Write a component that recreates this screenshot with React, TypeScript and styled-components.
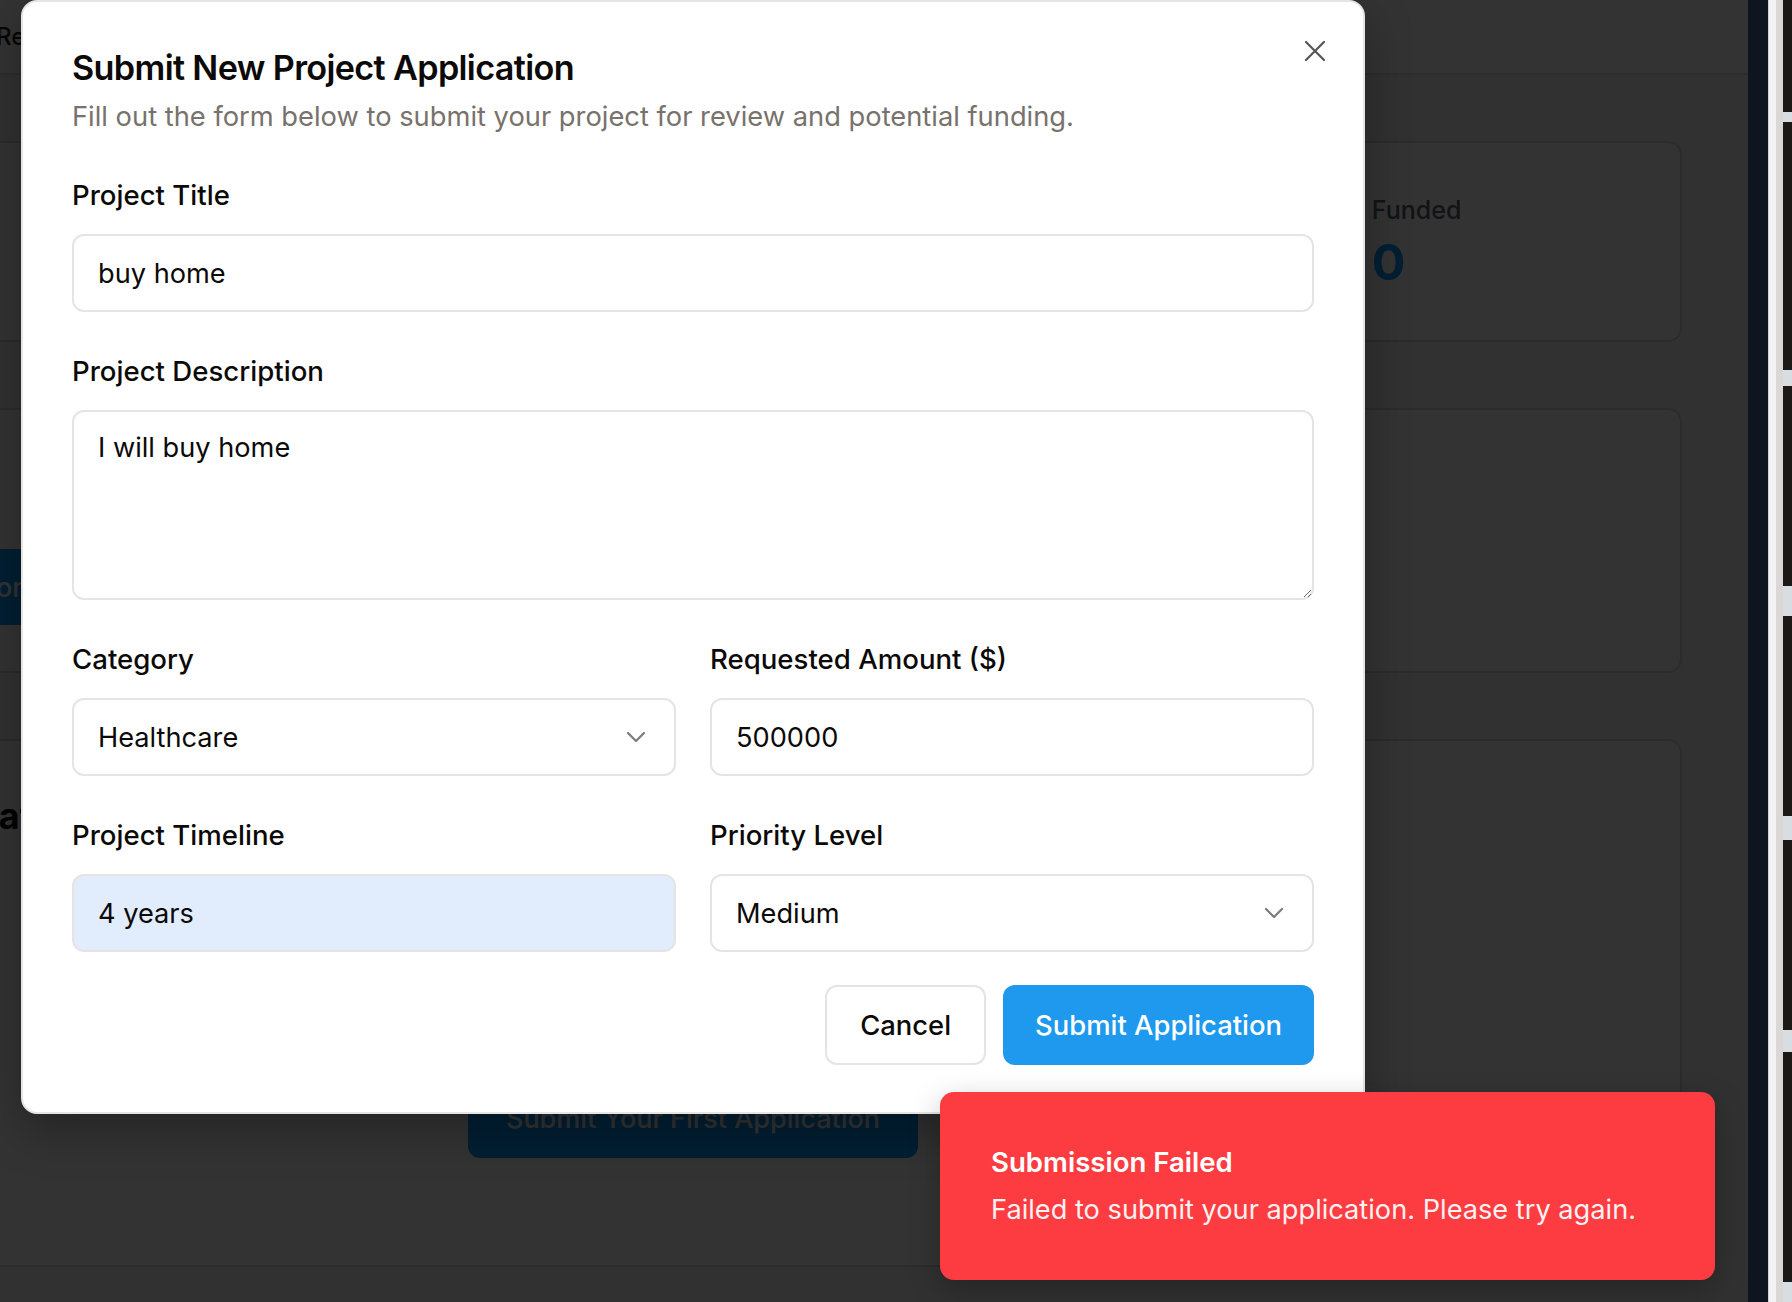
import React from "react";
import styled, { createGlobalStyle } from "styled-components";

const GlobalStyle = createGlobalStyle`
  * { box-sizing: border-box; }
  html, body { margin: 0; padding: 0; background: #333333; overflow: hidden; }
  body { font-family: Inter, "Noto Sans", sans-serif; -webkit-font-smoothing: antialiased; }
  #root { width: 1792px; height: 1302px; }
`;

const Screen = styled.div`
  display: flex;
  width: 1792px;
  height: 1302px;
  overflow: hidden;
`;

const Viewport = styled.div`
  position: relative;
  flex: 0 0 2110px;
  height: 1302px;
  margin-left: -362px;
  overflow: hidden;
  background: #f6f6f6;
`;

/* ---------- page beneath the overlay ---------- */

const Header = styled.header`
  height: 75px;
  display: flex;
  align-items: center;
  gap: 56px;
  padding: 0 66px;
  background: #ffffff;
  border-bottom: 2px solid #dedede;
`;

const Brand = styled.div`
  width: 236px;
  font-size: 28px;
  font-weight: 700;
  color: #111;
`;

const NavLink = styled.span`
  font-size: 24px;
  font-weight: 500;
  color: #222;
`;

const Main = styled.main`
  display: flex;
  flex-direction: column;
  gap: 66px;
  padding: 66px 66px 0;
`;

const StatsGrid = styled.div`
  display: grid;
  grid-template-columns: repeat(5, 1fr);
  gap: 48px;
`;

const Card = styled.section`
  background: #ffffff;
  border: 2px solid #d6d6d6;
  border-radius: 14px;
`;

const StatCard = styled(Card)`
  height: 201px;
  padding: 52px 45px 0;
  display: flex;
  flex-direction: column;
  gap: 8px;
`;

const StatLabel = styled.div`
  font-size: 25px;
  line-height: 30px;
  font-weight: 500;
  color: #5b6270;
`;

const StatValue = styled.div`
  font-size: 50px;
  line-height: 58px;
  font-weight: 700;
  color: #0a9bff;
`;

const ActionsCard = styled(Card)`
  height: 265px;
  padding: 46px 48px;
  display: flex;
  flex-direction: column;
  gap: 8px;
`;

const CardTitle = styled.h2`
  margin: 0;
  font-size: 36px;
  line-height: 44px;
  font-weight: 700;
  color: #111;
`;

const CardText = styled.p`
  margin: 0;
  font-size: 24px;
  line-height: 30px;
  color: #666;
`;

const PrimaryPageButton = styled.button<{ $center?: boolean }>`
  height: 80px;
  margin-top: ${(p) => (p.$center ? "0" : "3px")};
  padding: 0 38px;
  border: none;
  border-radius: 12px;
  background: #0a9bff;
  color: #ffffff;
  font-family: inherit;
  font-size: 27px;
  font-weight: 500;
  align-self: ${(p) => (p.$center ? "center" : "flex-start")};
`;

const ListCard = styled(Card)`
  height: 528px;
  padding: 53px 48px 44px;
  display: flex;
  flex-direction: column;
`;

const EmptyState = styled.div`
  flex: 1;
  display: flex;
  flex-direction: column;
  align-items: center;
  justify-content: flex-end;
  padding-bottom: 63px;
`;

/* ---------- overlay, dialog, toast ---------- */

const Overlay = styled.div`
  position: absolute;
  inset: 0;
  background: rgba(0, 0, 0, 0.8);
`;

const Dialog = styled.div`
  position: absolute;
  top: 0;
  left: 50%;
  transform: translateX(-50%);
  width: 1344px;
  padding: 48px 49px 47px;
  background: #ffffff;
  border: 2px solid #e7e5e4;
  border-radius: 16px;
  box-shadow: 0 16px 48px rgba(0, 0, 0, 0.3);
  display: flex;
  flex-direction: column;
`;

const CloseButton = styled.button`
  position: absolute;
  top: 37px;
  right: 36px;
  width: 24px;
  height: 24px;
  padding: 0;
  border: none;
  background: transparent;
  display: flex;
  align-items: center;
  justify-content: center;
  color: #555555;
`;

const DialogTitle = styled.h1`
  margin: 0;
  font-size: 34.2px;
  line-height: 36px;
  font-weight: 600;
  letter-spacing: -0.65px;
  color: #0c0a09;
`;

const DialogDescription = styled.p`
  margin: 16px 0 0;
  font-size: 27.3px;
  line-height: 30px;
  color: #78716c;
`;

const Form = styled.form`
  margin-top: 48px;
  display: flex;
  flex-direction: column;
  gap: 44px;
`;

const Row = styled.div`
  display: grid;
  grid-template-columns: 1fr 1fr;
  gap: 34px;
`;

const Field = styled.div`
  display: flex;
  flex-direction: column;
  gap: 24px;
`;

const Label = styled.label`
  font-size: 27.6px;
  line-height: 30px;
  font-weight: 500;
  color: #0c0a09;
`;

const TextInput = styled.input<{ $autofill?: boolean }>`
  height: 78px;
  width: 100%;
  padding: 0 24px;
  border: 2px solid #e7e3e3;
  border-radius: 12px;
  background: ${(p) => (p.$autofill ? "#e1ecfc" : "#ffffff")};
  font-family: inherit;
  font-size: 27.2px;
  color: #0c0a09;
  outline: none;
`;

const TextArea = styled.textarea`
  height: 190px;
  width: 100%;
  padding: 19px 24px;
  border: 2px solid #e7e3e3;
  border-radius: 12px;
  background: #ffffff;
  font-family: inherit;
  font-size: 27.2px;
  line-height: 34px;
  color: #0c0a09;
  resize: vertical;
  outline: none;
`;

const SelectTrigger = styled.button`
  height: 78px;
  width: 100%;
  padding: 0 28px 0 24px;
  border: 2px solid #e7e3e3;
  border-radius: 12px;
  background: #ffffff;
  display: flex;
  align-items: center;
  justify-content: space-between;
  font-family: inherit;
  font-size: 27.2px;
  color: #0c0a09;
  text-align: left;
`;

const Footer = styled.div`
  margin-top: 33px;
  display: flex;
  justify-content: flex-end;
  gap: 17px;
`;

const Button = styled.button<{ $primary?: boolean }>`
  height: 80px;
  padding: 0 ${(p) => (p.$primary ? "32px" : "33px")};
  border-radius: 12px;
  border: ${(p) => (p.$primary ? "none" : "2px solid #e7e3e3")};
  background: ${(p) => (p.$primary ? "#1e99ee" : "#ffffff")};
  color: ${(p) => (p.$primary ? "#ffffff" : "#0c0a09")};
  font-family: inherit;
  font-size: 27.4px;
  font-weight: 500;
`;

const Toast = styled.div`
  position: absolute;
  right: 33px;
  bottom: 22px;
  width: 775px;
  height: 188px;
  padding: 0 51px;
  border-radius: 14px;
  background: #fd3c41;
  color: #ffffff;
  display: flex;
  flex-direction: column;
  justify-content: center;
  gap: 18px;
  box-shadow: 0 10px 30px rgba(0, 0, 0, 0.25);
`;

const ToastTitle = styled.div`
  font-size: 27.6px;
  line-height: 30px;
  font-weight: 600;
`;

const ToastText = styled.div`
  font-size: 27.2px;
  line-height: 30px;
  opacity: 0.93;
`;

/* ---------- neighbouring window at the right edge ---------- */

const SideWindow = styled.div`
  flex: 0 0 44px;
  display: flex;
  height: 1302px;
`;

const NavyBar = styled.div`
  width: 20px;
  background: #0e1520;
`;

const PaleBar = styled.div`
  width: 8px;
  background: #f2f2f2;
  border-left: 1px solid #d0d0d0;
`;

const Strip = styled.div`
  width: 7px;
  background: #dcd7d7;
`;

const Thumbs = styled.div`
  flex: 1;
  display: flex;
  flex-direction: column;
`;

const Thumb = styled.div<{ $h: number; $dark?: boolean }>`
  height: ${(p) => p.$h}px;
  background: ${(p) => (p.$dark ? "#1c1916" : "#d8dde2")};
`;

const Chevron = () => (
  <svg width="20" height="12" viewBox="0 0 20 12" fill="none">
    <path d="M2 2l8 8 8-8" stroke="#7b7b7b" strokeWidth="2.2" strokeLinecap="round" strokeLinejoin="round" />
  </svg>
);

const CloseIcon = () => (
  <svg width="22" height="22" viewBox="0 0 22 22" fill="none">
    <path d="M2 2l18 18M20 2L2 20" stroke="currentColor" strokeWidth="2.2" strokeLinecap="round" />
  </svg>
);

const thumbs: Array<[number, boolean]> = [
  [112, true], [10, false], [248, true], [16, false], [200, true], [30, false],
  [200, true], [24, false], [190, true], [22, false], [230, true], [20, false],
];

export default function App() {
  return (
    <>
      <GlobalStyle />
      <Screen>
        <Viewport>
          <Header>
            <Brand>FundFlow</Brand>
            <NavLink>Reviews</NavLink>
          </Header>
          <Main>
            <StatsGrid>
              <StatCard>
                <StatLabel>Total Applications</StatLabel>
                <StatValue>0</StatValue>
              </StatCard>
              <StatCard />
              <StatCard />
              <StatCard />
              <StatCard>
                <StatLabel>Funded</StatLabel>
                <StatValue>0</StatValue>
              </StatCard>
            </StatsGrid>
            <ActionsCard>
              <CardTitle>Actions</CardTitle>
              <CardText>Start here.</CardText>
              <PrimaryPageButton>+ New Application</PrimaryPageButton>
            </ActionsCard>
            <ListCard>
              <CardTitle>Recent Applications</CardTitle>
              <EmptyState>
                <PrimaryPageButton $center>Submit Your First Application</PrimaryPageButton>
              </EmptyState>
            </ListCard>
          </Main>

          <Overlay />

          <Dialog role="dialog">
            <CloseButton aria-label="Close">
              <CloseIcon />
            </CloseButton>
            <DialogTitle>Submit New Project Application</DialogTitle>
            <DialogDescription>
              Fill out the form below to submit your project for review and potential funding.
            </DialogDescription>
            <Form onSubmit={(e) => e.preventDefault()}>
              <Field>
                <Label>Project Title</Label>
                <TextInput defaultValue="buy home" />
              </Field>
              <Field>
                <Label>Project Description</Label>
                <TextArea defaultValue="I will buy home" />
              </Field>
              <Row>
                <Field>
                  <Label>Category</Label>
                  <SelectTrigger type="button">
                    <span>Healthcare</span>
                    <Chevron />
                  </SelectTrigger>
                </Field>
                <Field>
                  <Label>Requested Amount ($)</Label>
                  <TextInput defaultValue="500000" />
                </Field>
              </Row>
              <Row>
                <Field>
                  <Label>Project Timeline</Label>
                  <TextInput $autofill defaultValue="4 years" />
                </Field>
                <Field>
                  <Label>Priority Level</Label>
                  <SelectTrigger type="button">
                    <span>Medium</span>
                    <Chevron />
                  </SelectTrigger>
                </Field>
              </Row>
            </Form>
            <Footer>
              <Button type="button">Cancel</Button>
              <Button type="button" $primary>Submit Application</Button>
            </Footer>
          </Dialog>

          <Toast role="status">
            <ToastTitle>Submission Failed</ToastTitle>
            <ToastText>Failed to submit your application. Please try again.</ToastText>
          </Toast>
        </Viewport>

        <SideWindow>
          <NavyBar />
          <PaleBar />
          <Strip />
          <Thumbs>
            {thumbs.map(([h, dark], i) => (
              <Thumb key={i} $h={h} $dark={dark} />
            ))}
          </Thumbs>
        </SideWindow>
      </Screen>
    </>
  );
}
